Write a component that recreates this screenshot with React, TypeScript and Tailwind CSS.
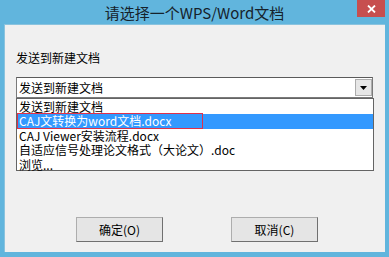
import React from "react";

const font = { fontFamily: '"Noto Sans CJK SC", "Microsoft YaHei", sans-serif' };

export default function App() {
  const items = [
    "发送到新建文档",
    "CAJ文转换为word文档.docx",
    "CAJ Viewer安装流程.docx",
    "自适应信号处理论文格式（大论文）.doc",
    "浏览...",
  ];
  return (
    <div
      className="w-[389px] h-[257px] bg-[#61b5dd] flex flex-col relative overflow-hidden"
      style={font}
    >
      <div className="h-[24px] flex items-center justify-center text-[15px] text-[#16222b] leading-none pt-[1px]">
        请选择一个WPS/Word文档
      </div>
      <div className="absolute top-0 right-[4px] w-[28px] h-[17px] bg-[#c74f4f] flex items-center justify-center">
        <svg width="9" height="8" viewBox="0 0 9 8">
          <path d="M1 0.5 L8 7.5 M8 0.5 L1 7.5" stroke="#fff" strokeWidth="1.8" />
        </svg>
      </div>
      <div className="mx-[4px] mb-[5px] flex-1 bg-[#f0f0f0] border-t border-l border-[#8ac3de] pl-[11px] pt-[25px] flex flex-col">
        <div className="text-[12px] leading-[16px] text-black">发送到新建文档</div>
        <div className="mt-[11px] w-[357px] h-[21px] bg-white border border-[#7a7a7a] border-t-[#5a5a5a] flex items-center relative">
          <span className="text-[12px] leading-[16px] text-black pl-[2px]">发送到新建文档</span>
          <div className="absolute right-[0px] top-[1px] w-[17px] h-[17px] bg-[#e6e6e6] border border-[#acacac] flex items-center justify-center">
            <svg width="7" height="4" viewBox="0 0 7 4">
              <path d="M0 0 H7 L3.5 4 Z" fill="#000" />
            </svg>
          </div>
        </div>
        <div className="w-[358px] h-[73px] bg-white border border-[#646464] relative pt-[1px] flex flex-col">
          {items.map((t, i) => (
            <div
              key={i}
              className={
                "h-[14.4px] text-[12px] leading-[14.4px] pl-[2px] whitespace-nowrap " +
                (i === 1 ? "bg-[#3399ff] text-white" : "text-black")
              }
            >
              {t}
            </div>
          ))}
          <div className="absolute left-[0px] top-[14px] w-[186px] h-[16px] border border-[#e0304a]" />
        </div>
        <div className="mt-[46px] flex pl-[60px] gap-[68px]">
          <button className="w-[87px] h-[25px] bg-[#e5e5e5] border border-[#adadad] border-b-[#707070] border-r-[#707070] text-[12px] text-black leading-none">
            确定(O)
          </button>
          <button className="w-[87px] h-[25px] bg-[#e5e5e5] border border-[#adadad] border-b-[#707070] border-r-[#707070] text-[12px] text-black leading-none">
            取消(C)
          </button>
        </div>
      </div>
    </div>
  );
}
